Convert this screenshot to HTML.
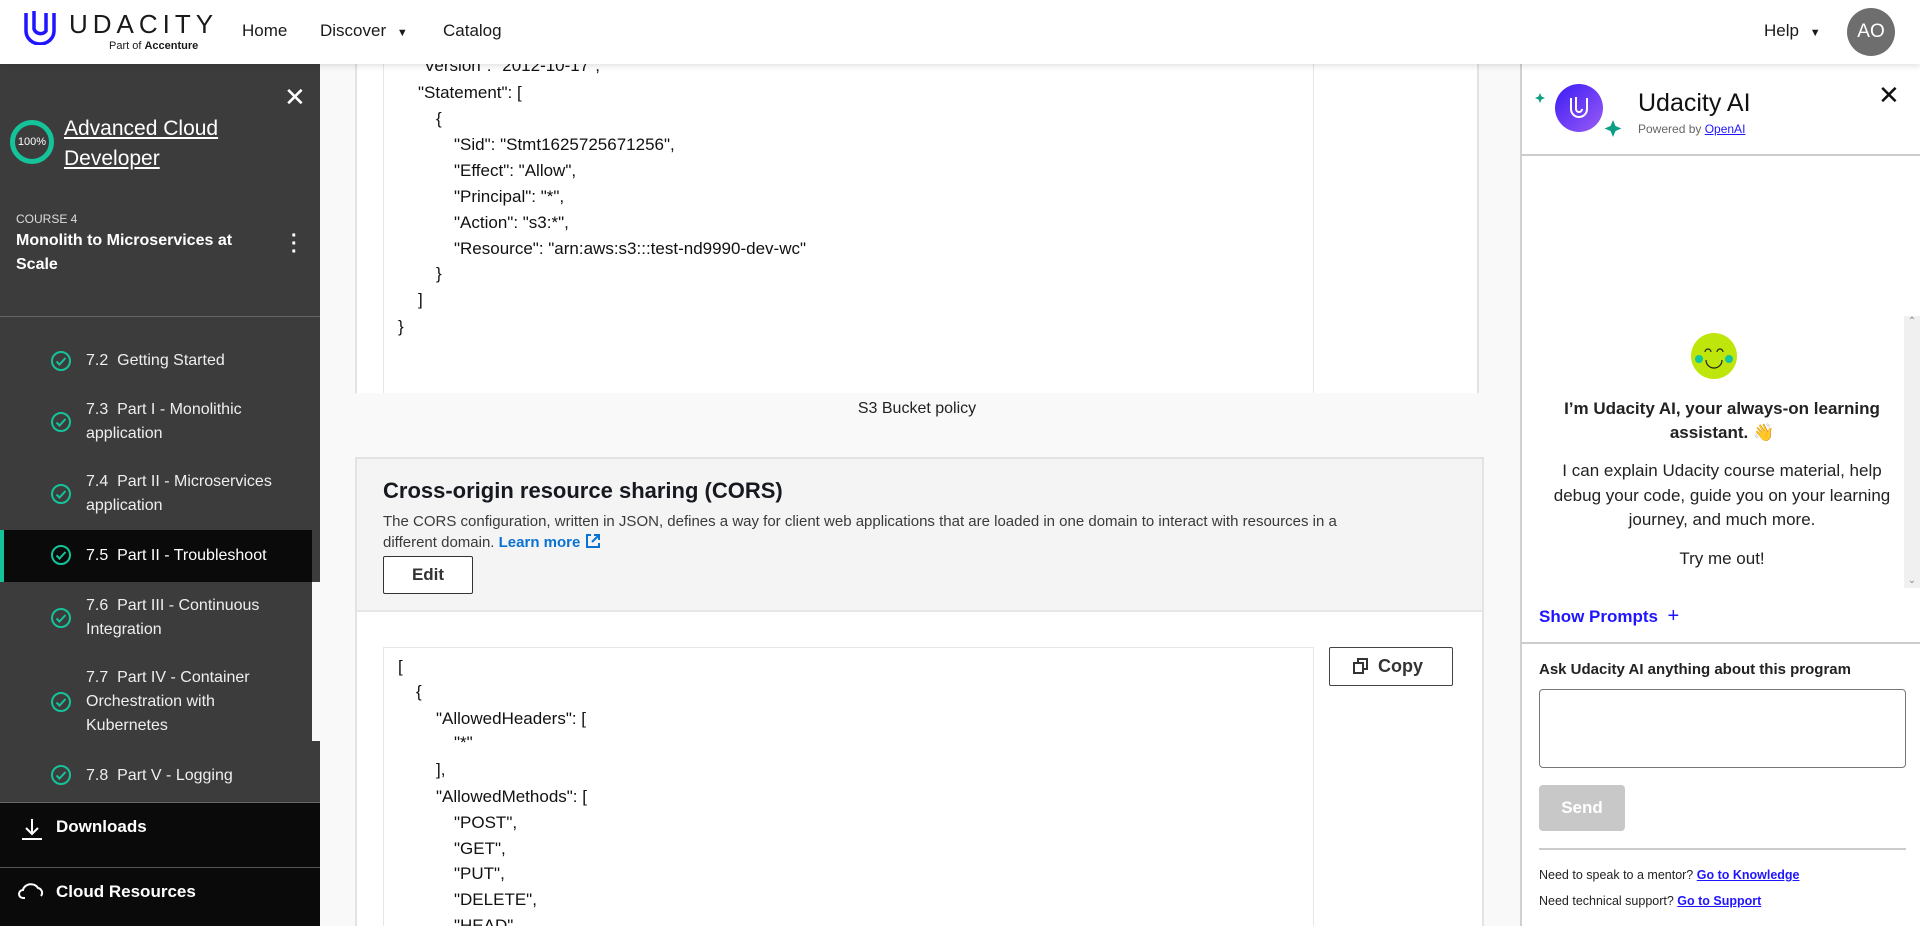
<!DOCTYPE html>
<html><head><meta charset="utf-8"><style>
*{margin:0;padding:0;box-sizing:border-box}
html{overflow:hidden;height:926px}
body{width:1920px;height:926px;overflow:hidden;position:relative;background:#f9f9f9;font-family:"Liberation Sans",sans-serif;color:#1a1a1a}
.a{position:absolute;white-space:nowrap}
#hdr{position:absolute;left:0;top:0;width:1920px;height:64px;background:#fff;box-shadow:0 2px 6px rgba(0,0,0,.12);z-index:10}
.nav{font-size:17px;color:#1a1a1a;top:21px}
#side{position:absolute;left:0;top:64px;width:320px;height:862px;background:#3c3c3c;color:#fff}
.it{position:absolute;left:86px;font-size:16px;line-height:24px;color:#eee}
.ck{position:absolute;left:50px;width:22px;height:22px}
.code{position:absolute;font-size:17px;color:#111;white-space:nowrap}
#ai{position:absolute;left:1520px;top:64px;width:400px;height:862px;background:#fff;border-left:2px solid #d0d0d0}
.c{text-align:center;width:400px;left:0}
</style></head><body>

<div id="hdr">
  <svg class="a" style="left:22px;top:9px" width="40" height="36" viewBox="0 0 40 36"><path d="M4 4 V22 A14 13 0 0 0 32 22 V4" fill="none" stroke="#2015ff" stroke-width="3.5"/><path d="M12 2 V20 A7 7 0 0 0 24 22 V4" fill="none" stroke="#2015ff" stroke-width="3.5"/></svg>
  <div class="a" style="left:69px;top:9px;font-size:26px;letter-spacing:5px;color:#1a1a1a">UDACITY</div>
  <div class="a" style="left:109px;top:40px;font-size:11px;color:#1a1a1a">Part of <b>Accenture</b></div>
  <div class="a nav" style="left:242px">Home</div>
  <div class="a nav" style="left:320px">Discover <span style="font-size:11px;margin-left:6px">▼</span></div>
  <div class="a nav" style="left:443px">Catalog</div>
  <div class="a nav" style="left:1764px">Help <span style="font-size:11px;margin-left:6px">▼</span></div>
  <div class="a" style="left:1847px;top:8px;width:48px;height:48px;border-radius:50%;background:#6e6e6e;color:#fff;font-size:19px;text-align:center;line-height:48px">AO</div>
</div>

<div id="side">
  <div class="a" style="left:284px;top:18px;font-size:26px;color:#fff">✕</div>
  <div class="a" style="left:10px;top:56px;width:44px;height:44px;border-radius:50%;border:5px solid #15c39a;font-size:11px;text-align:center;line-height:34px">100%</div>
  <div class="a" style="left:64px;top:50px;font-size:21px;line-height:30px;text-decoration:underline;white-space:normal;width:200px">Advanced Cloud Developer</div>
  <div class="a" style="left:16px;top:148px;font-size:12px;color:#ddd">COURSE 4</div>
  <div class="a" style="left:16px;top:165px;font-size:16px;line-height:24px;font-weight:bold;white-space:normal;width:240px">Monolith to Microservices at Scale</div>
  <div class="a" style="left:291px;top:168px;font-size:20px;line-height:8px;font-weight:bold">·<br>·<br>·</div>
  <div class="a" style="left:0;top:252px;width:320px;height:1px;background:#666"></div>
  <div class="a" style="left:0;top:466px;width:312px;height:52px;background:#0a0a0a;border-left:4px solid #15c39a"></div>
  <div class="a" style="left:312px;top:518px;width:8px;height:159px;background:#f8f8f8"></div>
  <div class="it" style="top:285px">7.2&nbsp; Getting Started</div>
  <div class="it" style="top:334px">7.3&nbsp; Part I - Monolithic<br>application</div>
  <div class="it" style="top:406px">7.4&nbsp; Part II - Microservices<br>application</div>
  <div class="it" style="top:480px;color:#fff">7.5&nbsp; Part II - Troubleshoot</div>
  <div class="it" style="top:530px">7.6&nbsp; Part III - Continuous<br>Integration</div>
  <div class="it" style="top:602px">7.7&nbsp; Part IV - Container<br>Orchestration with<br>Kubernetes</div>
  <div class="it" style="top:700px">7.8&nbsp; Part V - Logging</div>
  <svg class="ck" style="top:286px" viewBox="0 0 22 22"><circle cx="11" cy="11" r="9" fill="none" stroke="#15c39a" stroke-width="2"/><path d="M6.5 11.5l3 3 6-6.5" fill="none" stroke="#15c39a" stroke-width="2"/></svg>
  <svg class="ck" style="top:347px" viewBox="0 0 22 22"><circle cx="11" cy="11" r="9" fill="none" stroke="#15c39a" stroke-width="2"/><path d="M6.5 11.5l3 3 6-6.5" fill="none" stroke="#15c39a" stroke-width="2"/></svg>
  <svg class="ck" style="top:419px" viewBox="0 0 22 22"><circle cx="11" cy="11" r="9" fill="none" stroke="#15c39a" stroke-width="2"/><path d="M6.5 11.5l3 3 6-6.5" fill="none" stroke="#15c39a" stroke-width="2"/></svg>
  <svg class="ck" style="top:480px" viewBox="0 0 22 22"><circle cx="11" cy="11" r="9" fill="none" stroke="#15c39a" stroke-width="2"/><path d="M6.5 11.5l3 3 6-6.5" fill="none" stroke="#15c39a" stroke-width="2"/></svg>
  <svg class="ck" style="top:543px" viewBox="0 0 22 22"><circle cx="11" cy="11" r="9" fill="none" stroke="#15c39a" stroke-width="2"/><path d="M6.5 11.5l3 3 6-6.5" fill="none" stroke="#15c39a" stroke-width="2"/></svg>
  <svg class="ck" style="top:627px" viewBox="0 0 22 22"><circle cx="11" cy="11" r="9" fill="none" stroke="#15c39a" stroke-width="2"/><path d="M6.5 11.5l3 3 6-6.5" fill="none" stroke="#15c39a" stroke-width="2"/></svg>
  <svg class="ck" style="top:700px" viewBox="0 0 22 22"><circle cx="11" cy="11" r="9" fill="none" stroke="#15c39a" stroke-width="2"/><path d="M6.5 11.5l3 3 6-6.5" fill="none" stroke="#15c39a" stroke-width="2"/></svg>
  <div class="a" style="left:0;top:738px;width:320px;height:124px;background:#0a0a0a;border-top:1px solid #666"></div>
  <div class="a" style="left:0;top:803px;width:320px;height:1px;background:#555"></div>
  <svg class="a" style="left:20px;top:752px" width="24" height="26" viewBox="0 0 24 26"><path d="M12 3v15M6 12l6 6 6-6M2 23h20" fill="none" stroke="#fff" stroke-width="2"/></svg>
  <div class="a" style="left:56px;top:753px;font-size:17px;font-weight:bold">Downloads</div>
  <svg class="a" style="left:18px;top:816px" width="28" height="22" viewBox="0 0 28 22"><path d="M7 18H5a4 4 0 0 1 0-8 8 7 0 0 1 15-2 5 5 0 0 1 3 8" fill="none" stroke="#fff" stroke-width="2"/></svg>
  <div class="a" style="left:56px;top:818px;font-size:17px;font-weight:bold">Cloud Resources</div>
</div>

<!-- main -->
<div class="a" style="left:355px;top:40px;width:1124px;height:353px;background:#fff;border-left:2px solid #e3e3e3;border-right:2px solid #e3e3e3"></div>
<div class="a" style="left:383px;top:40px;width:931px;height:353px;border-left:1px solid #e6e6e6;border-right:1px solid #e6e6e6"></div>
<div class="code" style="left:418px;top:56px">"Version": "2012-10-17",</div>
<div class="code" style="left:418px;top:83px">"Statement": [</div>
<div class="code" style="left:436px;top:109px">{</div>
<div class="code" style="left:454px;top:135px">"Sid": "Stmt1625725671256",</div>
<div class="code" style="left:454px;top:161px">"Effect": "Allow",</div>
<div class="code" style="left:454px;top:187px">"Principal": "*",</div>
<div class="code" style="left:454px;top:213px">"Action": "s3:*",</div>
<div class="code" style="left:454px;top:239px">"Resource": "arn:aws:s3:::test-nd9990-dev-wc"</div>
<div class="code" style="left:436px;top:264px">}</div>
<div class="code" style="left:418px;top:290px">]</div>
<div class="code" style="left:398px;top:317px">}</div>
<div class="a" style="left:355px;top:400px;width:1124px;text-align:center;font-size:16px;color:#222">S3 Bucket policy</div>

<div class="a" style="left:355px;top:457px;width:1129px;height:469px;background:#fff;border:2px solid #e3e3e3;border-bottom:none"></div>
<div class="a" style="left:357px;top:459px;width:1125px;height:153px;background:#f4f4f4;border-bottom:2px solid #e6e6e6"></div>
<div class="a" style="left:383px;top:478px;font-size:22px;font-weight:bold;color:#16191f">Cross-origin resource sharing (CORS)</div>
<div class="a" style="left:383px;top:511px;width:1010px;font-size:15px;line-height:21px;color:#3a3a3a;white-space:normal">The CORS configuration, written in JSON, defines a way for client web applications that are loaded in one domain to interact with resources in a different domain. <b style="color:#0972d3">Learn more</b> <svg width="16" height="16" viewBox="0 0 16 16" style="vertical-align:-2px"><path d="M6 2H2v12h12v-4M9 2h5v5M14 2L7 9" fill="none" stroke="#0972d3" stroke-width="2"/></svg></div>
<div class="a" style="left:383px;top:556px;width:90px;height:38px;border:1.5px solid #333;border-radius:2px;background:#fff;text-align:center;line-height:35px;font-size:17px;font-weight:bold;color:#333">Edit</div>
<div class="a" style="left:383px;top:647px;width:931px;height:279px;border:1px solid #e6e6e6;border-bottom:none"></div>
<div class="a" style="left:1329px;top:647px;width:124px;height:39px;border:1.5px solid #444;border-radius:2px;font-size:18px;font-weight:bold;color:#333;line-height:36px;padding-left:22px"><svg width="18" height="18" viewBox="0 0 18 18" style="vertical-align:-3px;margin-right:8px"><rect x="2" y="6" width="9" height="10" fill="none" stroke="#333" stroke-width="2"/><path d="M6 6V2h9v10h-4" fill="none" stroke="#333" stroke-width="2"/></svg>Copy</div>
<div class="code" style="left:398px;top:657px">[</div>
<div class="code" style="left:416px;top:682px">{</div>
<div class="code" style="left:436px;top:709px">"AllowedHeaders": [</div>
<div class="code" style="left:454px;top:733px">"*"</div>
<div class="code" style="left:436px;top:760px">],</div>
<div class="code" style="left:436px;top:787px">"AllowedMethods": [</div>
<div class="code" style="left:454px;top:813px">"POST",</div>
<div class="code" style="left:454px;top:839px">"GET",</div>
<div class="code" style="left:454px;top:864px">"PUT",</div>
<div class="code" style="left:454px;top:890px">"DELETE",</div>
<div class="code" style="left:454px;top:916px">"HEAD",</div>

<div id="ai">
  <svg class="a" style="left:12px;top:20px" width="100" height="60" viewBox="0 0 100 60"><defs><linearGradient id="g" x1="0" y1="0" x2="1" y2="1"><stop offset="0" stop-color="#3b1cf5"/><stop offset="1" stop-color="#9a5cf5"/></linearGradient></defs><circle cx="45" cy="24" r="24" fill="url(#g)"/><path d="M37 14v11a8 8 0 0 0 16 0v-11M42 13v12a3 3 0 0 0 6 0" fill="none" stroke="#fff" stroke-width="2"/><path d="M6 9l1.5 3.5 3.5 1.5-3.5 1.5-1.5 3.5-1.5-3.5-3.5-1.5 3.5-1.5z" fill="#0d9e86"/><path d="M79 36l2.5 6 6 2.5-6 2.5-2.5 6-2.5-6-6-2.5 6-2.5z" fill="#0d9e86"/></svg>
  <div class="a" style="left:116px;top:25px;font-size:25px;color:#111">Udacity AI</div>
  <div class="a" style="left:116px;top:58px;font-size:12px;color:#666">Powered by <u style="color:#2015ff">OpenAI</u></div>
  <div class="a" style="left:356px;top:16px;font-size:26px;color:#111">✕</div>
  <div class="a" style="left:0;top:90px;width:398px;height:1.5px;background:#ccc"></div>
  <div class="a" style="left:382px;top:252px;width:16px;height:272px;background:#f0f0f0;font-size:10px;color:#888;text-align:center">⌃<div style="position:absolute;bottom:2px;width:16px">⌄</div></div>
  <svg class="a" style="left:169px;top:269px" width="46" height="46" viewBox="0 0 46 46"><circle cx="23" cy="23" r="23" fill="#bfe60b"/><circle cx="8" cy="26" r="4" fill="#12c4a0"/><circle cx="38" cy="26" r="4" fill="#12c4a0"/><path d="M14 19a3 3 0 0 1 6 0M26 19a3 3 0 0 1 6 0M15 27a8 8 0 0 0 16 0" fill="none" stroke="#222" stroke-width="1.2"/></svg>
  <div class="a c" style="top:333px;font-size:17px;line-height:24px;font-weight:bold;color:#222;padding:0 30px;white-space:normal">I’m Udacity AI, your always-on learning assistant. 👋</div>
  <div class="a c" style="top:395px;font-size:17px;line-height:24.5px;color:#222;padding:0 28px;white-space:normal">I can explain Udacity course material, help debug your code, guide you on your learning journey, and much more.</div>
  <div class="a c" style="top:485px;font-size:17px;color:#222">Try me out!</div>
  <div class="a" style="left:17px;top:541px;font-size:17px;font-weight:bold;color:#2015ff">Show Prompts &nbsp;<span style="font-weight:normal;font-size:20px">+</span></div>
  <div class="a" style="left:0;top:578px;width:398px;height:1.5px;background:#ccc"></div>
  <div class="a" style="left:17px;top:597px;font-size:15px;font-weight:bold;color:#222">Ask Udacity AI anything about this program</div>
  <div class="a" style="left:17px;top:625px;width:367px;height:79px;border:1.5px solid #777;border-radius:4px"></div>
  <div class="a" style="left:17px;top:721px;width:86px;height:46px;background:#c8c8c8;border-radius:4px;color:#fff;font-size:17px;font-weight:bold;text-align:center;line-height:46px">Send</div>
  <div class="a" style="left:17px;top:784px;width:367px;height:1.5px;background:#ccc"></div>
  <div class="a" style="left:17px;top:804px;font-size:12.5px;color:#222">Need to speak to a mentor? <b style="color:#2015ff;text-decoration:underline">Go to Knowledge</b></div>
  <div class="a" style="left:17px;top:830px;font-size:12.5px;color:#222">Need technical support? <b style="color:#2015ff;text-decoration:underline">Go to Support</b></div>
</div>
</body></html>
